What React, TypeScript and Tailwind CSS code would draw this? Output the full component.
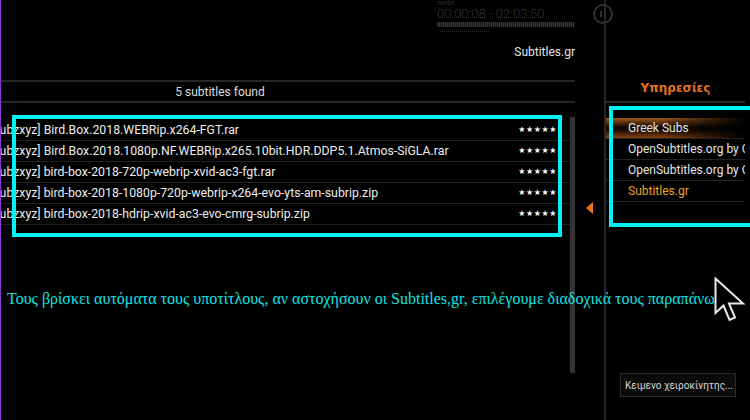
import React from 'react';

const rows = [
  '[subzxyz] Bird.Box.2018.WEBRip.x264-FGT.rar',
  '[subzxyz] Bird.Box.2018.1080p.NF.WEBRip.x265.10bit.HDR.DDP5.1.Atmos-SiGLA.rar',
  '[subzxyz] bird-box-2018-720p-webrip-xvid-ac3-fgt.rar',
  '[subzxyz] bird-box-2018-1080p-720p-webrip-x264-evo-yts-am-subrip.zip',
  '[subzxyz] bird-box-2018-hdrip-xvid-ac3-evo-cmrg-subrip.zip',
];

const services = [
  { name: 'Greek Subs', active: true },
  { name: 'OpenSubtitles.org by OpenSubtitles' },
  { name: 'OpenSubtitles.org by OpenSubtitles' },
  { name: 'Subtitles.gr', current: true },
];

function Cursor() {
  return (
    <svg width="34" height="50" viewBox="0 0 34 50" className="absolute left-[714px] top-[277px]">
      <path
        d="M1.5 1.5 L1.5 36 L9.5 28.5 L15.5 43 L21 40.5 L15 26.5 L29 26.5 Z"
        fill="#000"
        stroke="#e8e8e8"
        strokeWidth="2"
        strokeLinejoin="miter"
      />
    </svg>
  );
}

export default function App() {
  return (
    <div className="relative w-[750px] h-[420px] overflow-hidden bg-black flex font-['Roboto',sans-serif] text-[#e6e6e6]">
      {/* left panel */}
      <div className="w-[604px] shrink-0 flex flex-col border-l border-[#8a3ad0]">
        <div className="h-[80px] flex flex-col items-end pr-[29px]">
          <div className="w-[138px] flex flex-col">
            <span className="text-[5px] leading-[7px] text-[#3a3a3a] tracking-wider">ΠΑΥΣΗ</span>
            <span className="text-[13px] leading-[13px] text-[#333] font-light">00:00:08 - 02:03:50</span>
            <div className="mt-[2px] h-[5px] w-[138px] bg-[repeating-linear-gradient(90deg,#3a3a3a_0px,#3a3a3a_1px,#151515_1px,#151515_2px)]" />
            <div className="mt-[4px] ml-[4px] w-[48px] border-t border-dotted border-[#2a2a2a]" />
          </div>
          <span className="mt-[12px] text-[12px] leading-[16px] text-[#e4e4e4]">Subtitles.gr</span>
        </div>
        <div className="w-[574px] h-[23px] border-y-2 border-[#262626] flex items-center justify-center pr-[136px] text-[12px] text-[#dcdcdc]">
          5 subtitles found
        </div>
        <div className="flex flex-1">
          <div className="w-[569px] pt-[17px] flex flex-col">
            {rows.map((r, i) => (
              <div key={i} className="h-[21px] border-b border-[#222] flex items-center overflow-hidden">
                <span className="flex-1 ml-[-11px] whitespace-nowrap text-[12.3px] text-[#ececec]">{r}</span>
                <span className="pr-[13px] pl-2 text-[8px] tracking-[0.6px] text-white font-['DejaVu_Sans',sans-serif]">★★★★★</span>
              </div>
            ))}
          </div>
          <div className="w-[5px] mt-[14px] h-[256px] bg-[#333]" />
          <div className="flex-1 flex justify-center pt-[99px]">
            <div className="w-0 h-0 border-y-[6px] border-y-transparent border-r-[7px] border-r-[#e8731c]" />
          </div>
        </div>
      </div>

      {/* divider */}
      <div className="w-[2px] shrink-0 bg-[#262626]" />

      {/* right panel */}
      <div className="flex-1 flex flex-col">
        <div className="h-[103px] flex flex-col justify-end">
          <div className="w-[139px] border-b-2 border-[#262626] pb-[4px] text-center text-[12px] font-bold text-[#e0721e] font-['DejaVu_Sans',sans-serif]">
            Υπηρεσίες
          </div>
        </div>
        <div className="pt-[15px] flex flex-col w-[139px]">
          {services.map((s, i) => (
            <div
              key={i}
              className={`h-[21px] border-b border-[#222] flex items-center pl-[22px] overflow-hidden whitespace-nowrap text-[12px] ${
                s.current ? 'text-[#e9a326]' : 'text-[#e6e6e6]'
              } ${
                s.active
                  ? 'bg-[linear-gradient(to_right,transparent_40%,#000_100%),linear-gradient(to_bottom,#a25a1c,#150800_45%,#150800_60%,#8a4412)]'
                  : ''
              }`}
            >
              {s.name}
            </div>
          ))}
        </div>
        <div className="mt-auto mb-[23px] ml-[14px] w-[116px] h-[24px] border border-[#2a2a2a] bg-[#0b0b0b] flex items-center pl-[4px] text-[10px] text-[#d8d8d8] whitespace-nowrap">
          Κειμενο χειροκίνητης...
        </div>
      </div>

      {/* pause button over the divider */}
      <div className="absolute left-[593px] top-[4px] w-[20px] h-[20px] rounded-full border-2 border-[#303030] flex items-center justify-center gap-[2px]">
        <div className="w-[2px] h-[6px] bg-[#303030]" />
        <div className="w-[2px] h-[6px] bg-[#303030]" />
      </div>

      {/* cyan annotation boxes */}
      <div className="absolute left-[12px] top-[115px] w-[550px] h-[122px] border-4 border-[#00f2f2]" />
      <div className="absolute left-[609px] top-[106px] w-[160px] h-[121px] border-4 border-[#00f2f2]" />

      {/* caption */}
      <div className="absolute left-[7px] top-[289px] whitespace-nowrap text-[16px] leading-[20px] text-[#14e2e2] font-['Liberation_Serif',serif]">
        Τους βρίσκει αυτόματα τους υποτίτλους, αν αστοχήσουν οι Subtitles,gr, επιλέγουμε διαδοχικά τους παραπάνω
      </div>

      <Cursor />
    </div>
  );
}
